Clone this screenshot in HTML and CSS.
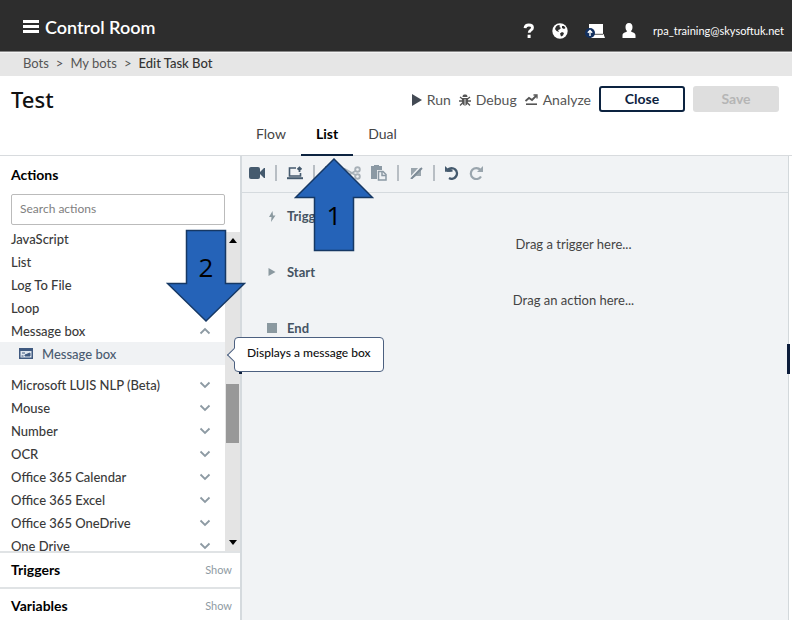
FILE: index.html
```html
<!DOCTYPE html>
<html lang="en">
<head>
<meta charset="utf-8">
<title>Control Room - Edit Task Bot</title>
<link rel="stylesheet" href="styles.css">
</head>
<body>
<div class="app">
  <header class="topbar">
    <button class="brand" type="button">
      <svg width="16" height="13" viewBox="0 0 16 13" fill="#fff"><path d="M0 0h16v3H0zM0 5h16v3H0zM0 10h16v3H0z"/></svg>
      <span>Control Room</span>
    </button>
    <nav class="account" aria-label="Account">
      <a href="#" aria-label="Help"><svg width="12" height="16" viewBox="0 0 12 16"><path d="M2 5.200C2.300 2.600 4 2 5.800 2c2.200 0 3.700 1 3.700 2.700 0 2.600-3.300 2.300-3.300 5" fill="none" stroke="#fff" stroke-width="2.800"/><path d="M4.600 11.700h3V15h-3z" fill="#fff"/></svg></a>
      <a href="#" aria-label="Language"><svg width="16" height="16" viewBox="0 0 16 16"><circle cx="8" cy="8" r="7.700" fill="#fff"/><path d="M4 3.500 6 2l2 .5L7.500 4 9 5 7.500 6.500 6 7l1 2-2.500-1L3 6zM10 3l2 0L13.500 5 12 6l-2-1zM8 10.500l2-1.500 2 1-1 2.500-2 1z" fill="#2d2d2d"/></svg></a>
      <a href="#" aria-label="Local device"><svg width="20" height="16" viewBox="0 0 20 16"><path d="M4 1h14v10H4zM7 11h11.500l1.500 4H6z" fill="#fff"/><path d="M9 11.300h9" stroke="#2d2d2d" stroke-width=".8"/><circle cx="5" cy="10" r="5" fill="#12305f"/><path d="M5 13V8M2.800 9.800 5 7.600l2.200 2.200" fill="none" stroke="#fff" stroke-width="1.400"/></svg></a>
      <a href="#" class="user"><svg width="14" height="15" viewBox="0 0 14 15" fill="#fff"><path d="M7 0c2.500 0 3.500 1.800 3.500 4 0 2-.8 3.600-1.700 4.300.3 1 4.700.9 4.700 4.200V15H.5v-2.500c0-3.300 4.400-3.200 4.700-4.200C4.300 7.600 3.500 6 3.500 4 3.500 1.800 4.500 0 7 0z"/></svg><span>rpa_training@skysoftuk.net</span></a>
    </nav>
  </header>

  <nav class="crumbs" aria-label="Breadcrumb">
    <a href="#">Bots</a><span>&gt;</span><a href="#">My bots</a><span>&gt;</span><a href="#" class="current">Edit Task Bot</a>
  </nav>

  <section class="heading">
    <h1>Test</h1>
    <div class="commands">
      <button class="command" type="button"><svg width="10" height="12" viewBox="0 0 10 12"><path d="M0 0l10 6-10 6z" fill="#434a54"/></svg>Run</button>
      <button class="command" type="button"><svg width="12" height="12" viewBox="0 0 12 12"><path d="M3.500 3C3.500 1 4.500.5 6 .5S8.500 1 8.500 3zM3 4h6v4c0 2-1.500 3.500-3 3.500S3 10 3 8z" fill="#555"/><path d="M3.500 5 1 3M8.500 5 11 3M3 7H0M9 7h3M3.500 9 1 11.500M8.500 9l2.500 2.500" stroke="#555" stroke-width="1.300"/><path d="M6 5v6" stroke="#fff" stroke-width=".8"/></svg>Debug</button>
      <button class="command" type="button"><svg width="13" height="12" viewBox="0 0 13 12" fill="none" stroke="#555"><path d="M.5 7 4 4l3 2 4.500-4.500" stroke-width="1.800"/><path d="M8.500 1H12v3.500" stroke-width="1.300"/><path d="M1 10.200h11" stroke-width="1.600"/></svg>Analyze</button>
      <button class="btn btn-close" type="button">Close</button>
      <button class="btn btn-save" type="button" disabled>Save</button>
    </div>
  </section>

  <nav class="tabs" aria-label="View">
    <button type="button">Flow</button>
    <button type="button" class="active">List<span class="callout callout-up"><svg width="80" height="94" viewBox="0 0 80 94"><path d="M40 1 78.500 39.500H59.500V92.500H20.500V39.500H1.500z" fill="#2563b8" stroke="#163864" stroke-width="1.500"/></svg><b>1</b></span></button>
    <button type="button">Dual</button>
  </nav>

  <main class="workspace">
    <aside class="sidebar">
      <h2>Actions</h2>
      <input class="search" type="text" placeholder="Search actions" aria-label="Search actions">
      <div class="scroller">
        <ul class="actions">
          <li>JavaScript</li>
          <li>List</li>
          <li>Log To File</li>
          <li>Loop</li>
          <li class="open">Message box<svg class="chev" width="12" height="8" viewBox="0 0 12 8"><path d="M1.500 6.500 6 2l4.500 4.500"/></svg>
            <span class="callout callout-down"><svg width="80" height="94" viewBox="0 0 80 94"><path d="M20.500 1.500H59.500V54.500H78.500L40 92 1.500 54.500H20.500z" fill="#2563b8" stroke="#163864" stroke-width="1.500"/></svg><b>2</b></span></li>
          <li class="child"><svg width="14" height="11" viewBox="0 0 14 11"><path d="M0 0h14v11H0z" fill="#405a80"/><path d="M1.500 3h11v6.500h-11z" fill="#dfe6ee"/><path d="M3 5h3M2.500 8h2M6 7l5-2v3H6z" stroke="#405a80" fill="#405a80"/></svg>Message box<span class="tooltip" role="tooltip">Displays a message box</span></li>
          <li>Microsoft LUIS NLP (Beta)<svg class="chev" width="12" height="8" viewBox="0 0 12 8"><path d="M1.500 1.500 6 6l4.500-4.500"/></svg></li>
          <li>Mouse<svg class="chev" width="12" height="8" viewBox="0 0 12 8"><path d="M1.500 1.500 6 6l4.500-4.500"/></svg></li>
          <li>Number<svg class="chev" width="12" height="8" viewBox="0 0 12 8"><path d="M1.500 1.500 6 6l4.500-4.500"/></svg></li>
          <li>OCR<svg class="chev" width="12" height="8" viewBox="0 0 12 8"><path d="M1.500 1.500 6 6l4.500-4.500"/></svg></li>
          <li>Office 365 Calendar<svg class="chev" width="12" height="8" viewBox="0 0 12 8"><path d="M1.500 1.500 6 6l4.500-4.500"/></svg></li>
          <li>Office 365 Excel<svg class="chev" width="12" height="8" viewBox="0 0 12 8"><path d="M1.500 1.500 6 6l4.500-4.500"/></svg></li>
          <li>Office 365 OneDrive<svg class="chev" width="12" height="8" viewBox="0 0 12 8"><path d="M1.500 1.500 6 6l4.500-4.500"/></svg></li>
          <li>One Drive<svg class="chev" width="12" height="8" viewBox="0 0 12 8"><path d="M1.500 1.500 6 6l4.500-4.500"/></svg></li>
        </ul>
        <div class="track">
          <svg width="8" height="5" viewBox="0 0 8 5"><path d="M4 0l4 5H0z"/></svg>
          <span class="thumb"></span>
          <svg width="8" height="5" viewBox="0 0 8 5"><path d="M0 0h8L4 5z"/></svg>
        </div>
      </div>
      <div class="panel"><h2>Triggers</h2><a href="#">Show</a></div>
      <div class="panel"><h2>Variables</h2><a href="#">Show</a></div>
      <span class="handle"></span>
    </aside>

    <section class="editor">
      <div class="toolbar">
        <button type="button" aria-label="Record"><svg width="16" height="12" viewBox="0 0 16 12" fill="#455a6e"><rect width="11" height="12" rx="2"/><path d="M11 5l4-4h1v10h-1l-4-4z"/></svg></button>
        <i></i>
        <button type="button" aria-label="Capture"><svg width="16" height="14" viewBox="0 0 16 14" fill="none" stroke="#455a6e"><path d="M9 2H2.500v8h11V7" stroke-width="1.600"/><path d="M0 12.200h16" stroke-width="2"/><path d="M12.500 6V1M10.500 3.500l2-2 2 2" stroke-width="1.800"/></svg></button>
        <i></i>
        <button type="button" aria-label="Copy"><svg width="8" height="14" viewBox="0 0 8 14" fill="#9aa5ad"><path d="M0 0h5v3H3v8H0zM4 4h4v10H4z"/></svg></button>
        <button type="button" aria-label="Cut"><svg width="18" height="14" viewBox="0 0 18 14" fill="none" stroke="#a8b1b8" stroke-width="1.900"><circle cx="14.500" cy="3.500" r="2.300"/><circle cx="14.500" cy="10.500" r="2.300"/><path d="M12.500 5 1 11.500M12.500 9 1 2.500"/></svg></button>
        <button type="button" aria-label="Paste"><svg width="16" height="16" viewBox="0 0 16 16"><path d="M0 1h3V0h5v1h3v4H6v9H0z" fill="#8b99a4"/><path d="M7.500 6.500h4.500l3 3v5.500H7.500z" fill="#eef1f4" stroke="#8b99a4" stroke-width="1.500"/><path d="M11 6v4.500h4" fill="none" stroke="#8b99a4" stroke-width="1.500"/></svg></button>
        <i></i>
        <button type="button" aria-label="Disable"><svg width="14" height="12" viewBox="0 0 14 12"><path d="M2 1h10v8H7l-4 3V9H2z" fill="#9aa5ad"/><path d="M1 11 11 0" stroke="#f0f2f4" stroke-width="1.500"/><path d="M2 12 13 1" stroke="#7d8b97" stroke-width="1.800"/></svg></button>
        <i></i>
        <button type="button" aria-label="Undo"><svg width="14" height="14" viewBox="0 0 14 14"><path d="M2 4.500h5.500M3 3.500A5.300 5.300 0 1 1 4 12" fill="none" stroke="#455a6e" stroke-width="2.400"/><path d="M0 0l6 5.700H0z" fill="#455a6e"/></svg></button>
        <button type="button" aria-label="Redo"><svg width="14" height="14" viewBox="0 0 14 14"><path d="M11.500 4A5.500 5.500 0 1 0 12 10.500" fill="none" stroke="#9aa5ad" stroke-width="2.200"/><path d="M14 0v6H8z" fill="#9aa5ad"/></svg></button>
      </div>
      <div class="steps">
        <div class="step"><svg width="10" height="11" viewBox="0 0 10 11" fill="#8b99a0"><path d="M5.500 0 2 6h2.500L4 11l4.500-6.500H6z"/></svg>Triggers</div>
        <p>Drag a trigger here...</p>
        <div class="step"><svg width="10" height="10" viewBox="0 0 10 10" fill="#8b99a0"><path d="M1.500 1l7 4-7 4z"/></svg>Start</div>
        <p>Drag an action here...</p>
        <div class="step"><svg width="10" height="10" viewBox="0 0 10 10" fill="#8b99a0"><path d="M0 0h10v10H0z"/></svg>End</div>
      </div>
      <span class="handle"></span>
    </section>
  </main>
</div>
</body>
</html>
```
FILE: styles.css
```css
* { box-sizing: border-box; }
body {
  margin: 0;
  background: #fff;
  color: #333;
  font: 13px/16px Lato, "Open Sans", sans-serif;
}
button {
  padding: 0;
  border: 0;
  background: none;
  color: inherit;
  font: inherit;
}
a { color: inherit; text-decoration: none; }
svg { display: block; flex: none; }
h1, h2, p, ul { margin: 0; padding: 0; }

.app {
  height: 100vh;
  overflow: hidden;
  display: flex;
  flex-direction: column;
}

.topbar {
  flex: none;
  height: 52px;
  padding: 2px 8px 0 23px;
  display: flex;
  align-items: center;
  justify-content: space-between;
  background: #2d2d2d;
  border-bottom: 1px solid #888;
  color: #fff;
}
.brand {
  display: flex;
  align-items: center;
  gap: 6px;
  font-size: 18px;
  font-weight: 600;
}
.account {
  display: flex;
  align-items: center;
  gap: 17px;
  padding-top: 8px;
  font-size: 11px;
}
.user { display: flex; align-items: center; gap: 17px; }

.crumbs {
  flex: none;
  height: 24px;
  padding: 0 0 4px 23px;
  display: flex;
  align-items: center;
  gap: 7px;
  background: #e6e6e6;
  border-top: 1px solid #f4f4f4;
  color: #555;
}
.crumbs .current { color: #333; font-weight: 500; }

.heading {
  flex: none;
  height: 46px;
  padding: 0 13px 0 11px;
  display: flex;
  align-items: center;
  justify-content: space-between;
}
h1 {
  color: #111;
  font: 500 22px/28px "Noto Sans", sans-serif;
}
.commands { display: flex; align-items: center; gap: 8px; }
.command {
  display: flex;
  align-items: center;
  gap: 5px;
  padding-top: 2px;
  color: #555;
  font-size: 14px;
}
.btn {
  width: 86px;
  height: 26px;
  border-radius: 3px;
  font-size: 14px;
  font-weight: 700;
}
.btn-close { border: 2px solid #0c2340; color: #0c2340; }
.btn-save { background: #dedede; color: #b5b5b5; }

.tabs {
  flex: none;
  height: 34px;
  padding-left: 241px;
  display: flex;
  border-bottom: 1px solid #d8dbde;
  font-size: 14px;
  color: #444;
}
.tabs button {
  position: relative;
  height: 34px;
  padding: 0 15px 10px;
}
.tabs .active {
  border-bottom: 2px solid #0c2340;
  padding-bottom: 8px;
  color: #000;
  font-weight: 700;
}

.callout { position: absolute; z-index: 3; width: 80px; }
.callout b {
  position: absolute;
  left: 0;
  right: 0;
  text-align: center;
  color: #000;
  font: 400 26px/32px "Open Sans", sans-serif;
}
.callout-up { top: 36px; left: 50%; margin-left: -33px; }
.callout-up b { top: 41px; }
.callout-down { bottom: 19px; right: -21px; }
.callout-down b { top: 22px; }

.workspace {
  flex: 1;
  min-height: 0;
  display: flex;
}
.sidebar {
  position: relative;
  flex: none;
  width: 242px;
  border-right: 2px solid #d5dade;
  display: flex;
  flex-direction: column;
}
h2 { color: #000; font-size: 14px; line-height: 18px; }
.sidebar > h2 { padding: 10px 11px; }
.search {
  flex: none;
  height: 31px;
  margin: 0 15px 0 11px;
  padding: 0 8px 2px;
  border: 1px solid #bbb;
  border-radius: 2px;
  font: inherit;
  font-size: 12px;
}
.search::placeholder { color: #808080; }
.scroller { flex: none; height: 326px; display: flex; }
.actions {
  flex: 1;
  list-style: none;
  padding-top: 2px;
  color: #3a3a3a;
  font-weight: 500;
}
.actions li {
  position: relative;
  height: 23px;
  padding: 0 14px 0 11px;
  display: flex;
  align-items: center;
  justify-content: space-between;
}
.actions .child {
  margin-bottom: 8px;
  padding-left: 19px;
  justify-content: flex-start;
  gap: 9px;
  background: #f0f2f4;
  color: #4a5b70;
}
.chev path { fill: none; stroke: #8d9aa3; stroke-width: 1.800; }
.track {
  width: 15px;
  margin-top: 7px;
  padding: 6px 0;
  display: flex;
  flex-direction: column;
  align-items: center;
  background: #e4e4e4;
}
.thumb {
  width: 13px;
  height: 59px;
  margin: 141px 0 auto;
  background: #989898;
}
.panel {
  position: relative;
  flex: none;
  height: 36px;
  padding: 0 8px 0 11px;
  display: flex;
  align-items: center;
  justify-content: space-between;
  border-top: 2px solid #e0e3e5;
  background: #fff;
}
.panel a { color: #8f9ba3; font-size: 11px; }

.tooltip {
  position: absolute;
  z-index: 4;
  left: 234px;
  top: -5px;
  padding: 7px 12px 10px;
  background: #fff;
  border: 1px solid #4c6080;
  border-radius: 4px;
  color: #111;
  font-size: 12px;
  white-space: nowrap;
}
.tooltip::before {
  content: "";
  position: absolute;
  left: -6px;
  top: 12px;
  width: 9px;
  height: 9px;
  background: #fff;
  border-left: 1px solid #4c6080;
  border-bottom: 1px solid #4c6080;
  transform: rotate(45deg);
}

.editor {
  position: relative;
  flex: 1;
  margin-right: 3px;
  border-right: 1px solid #d3d8db;
  background: #f1f3f5;
}
.toolbar {
  height: 37px;
  padding: 0 0 2px 7px;
  display: flex;
  align-items: center;
  gap: 10px;
  border-bottom: 1px solid #d5dade;
}
.toolbar i { width: 2px; height: 16px; background: #b8bec4; }
.steps { padding: 9px 0 0 25px; line-height: 28px; }
.step {
  display: flex;
  align-items: center;
  gap: 10px;
  color: #455363;
  font-weight: 700;
}
.steps p { padding-left: 92px; text-align: center; color: #444; }
.handle {
  position: absolute;
  right: -2px;
  top: 188px;
  width: 3px;
  height: 30px;
  background: #0c1c3a;
}
```
